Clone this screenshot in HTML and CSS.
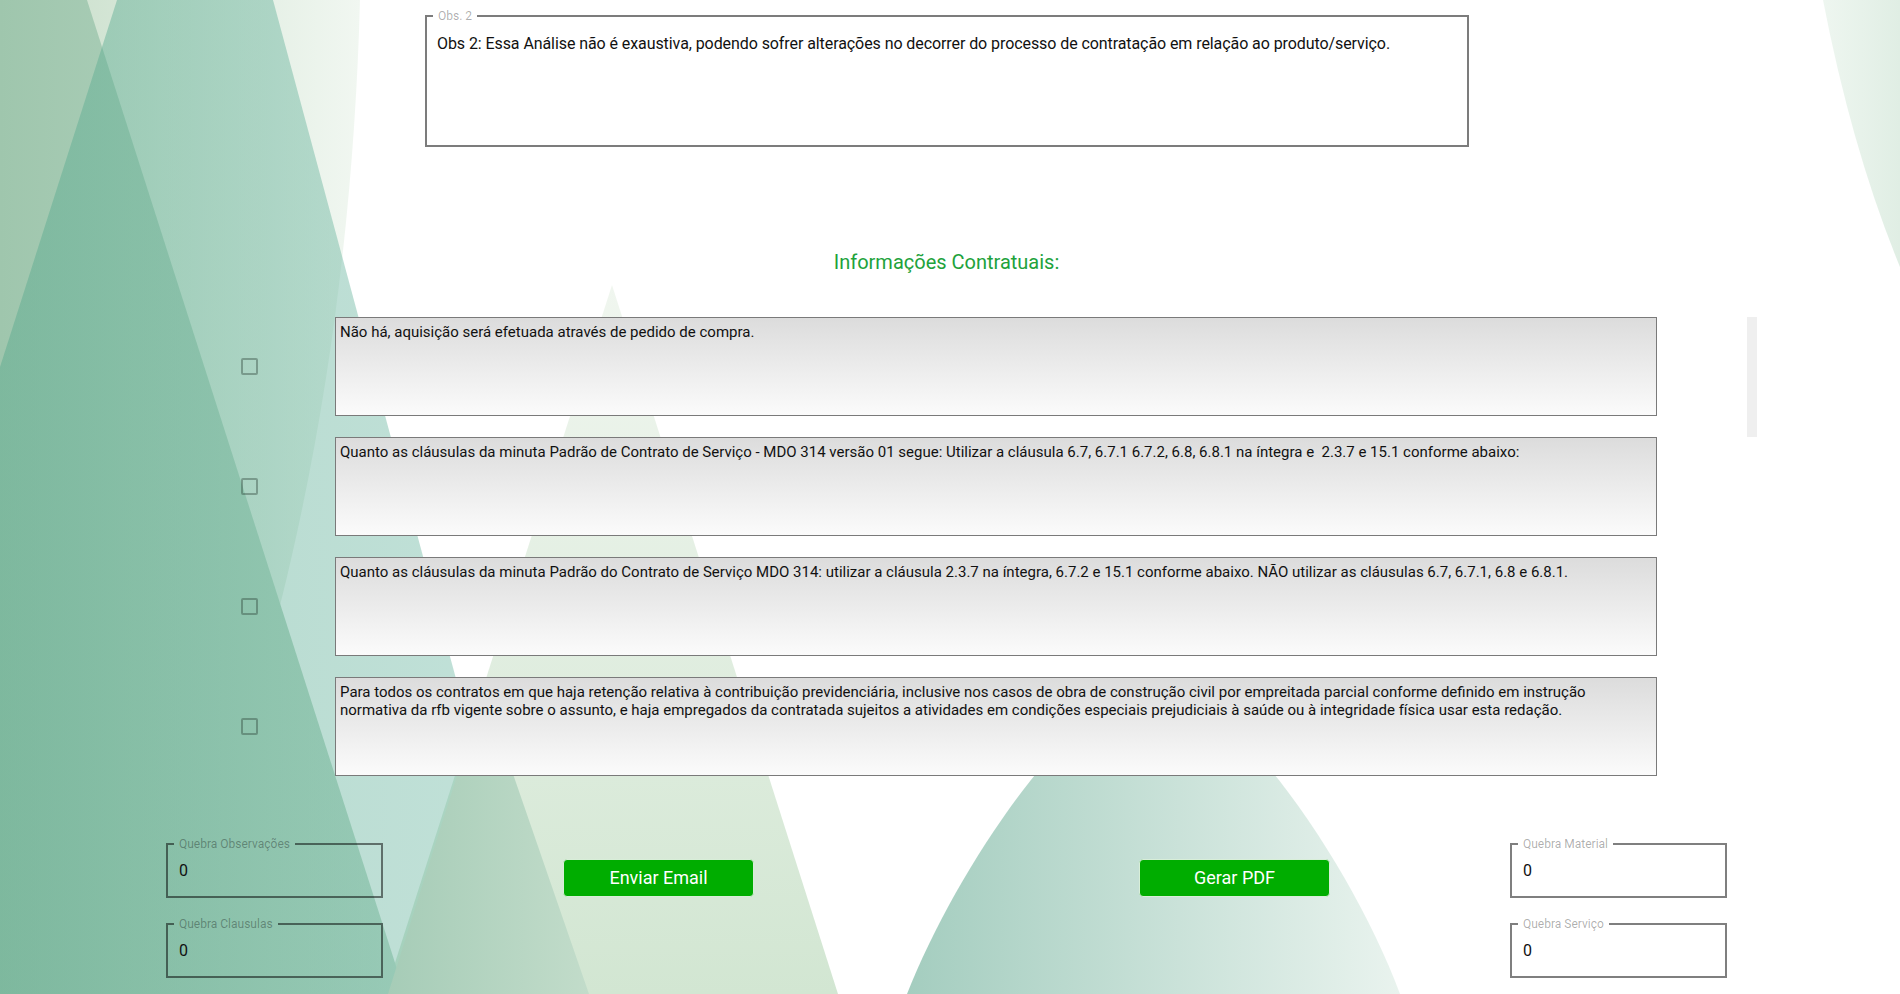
FILE: index.html
```html
<!DOCTYPE html>
<html lang="pt-BR">
<head>
<meta charset="utf-8">
<title>Informações Contratuais</title>
<link rel="stylesheet" href="styles.css">
</head>
<body>
<div class="bg" aria-hidden="true">
  <svg viewBox="0 0 1900 994" width="1900" height="994" preserveAspectRatio="none">
    <defs>
      <linearGradient id="gTC" x1="0" y1="0" x2="360" y2="0" gradientUnits="userSpaceOnUse">
        <stop offset="0" stop-color="#c6ddc8"/>
        <stop offset="1" stop-color="#f1f7f1"/>
      </linearGradient>
      <linearGradient id="gTA" x1="0" y1="0" x2="405" y2="0" gradientUnits="userSpaceOnUse">
        <stop offset="0" stop-color="#9fc6ad"/>
        <stop offset="1" stop-color="#bcdac8"/>
      </linearGradient>
      <linearGradient id="gTB" x1="0" y1="0" x2="541" y2="0" gradientUnits="userSpaceOnUse">
        <stop offset="0" stop-color="#55a88c" stop-opacity="0.45"/>
        <stop offset="1" stop-color="#6eb9a5" stop-opacity="0.42"/>
      </linearGradient>
      <linearGradient id="gTD" x1="0" y1="285" x2="0" y2="994" gradientUnits="userSpaceOnUse">
        <stop offset="0" stop-color="#f0f6ef"/>
        <stop offset="1" stop-color="#d2e6d2"/>
      </linearGradient>
      <linearGradient id="gTE" x1="388" y1="0" x2="589" y2="0" gradientUnits="userSpaceOnUse">
        <stop offset="0" stop-color="#a6ccb7"/>
        <stop offset="1" stop-color="#c2dcca"/>
      </linearGradient>
      <linearGradient id="gTF" x1="907" y1="0" x2="1400" y2="0" gradientUnits="userSpaceOnUse">
        <stop offset="0" stop-color="#a4cdbf"/>
        <stop offset="1" stop-color="#e9f3ee"/>
      </linearGradient>
      <linearGradient id="gTG" x1="1823" y1="0" x2="1900" y2="0" gradientUnits="userSpaceOnUse">
        <stop offset="0" stop-color="#eef6f0"/>
        <stop offset="1" stop-color="#e0eee4"/>
      </linearGradient>
    </defs>
    <path d="M0,0 L360,0 C352,300 300,650 147,994 L0,994 Z" fill="url(#gTC)"/>
    <polygon points="612,285 838,994 385,994" fill="url(#gTD)"/>
    <polygon points="0,0 87,0 405,994 0,994" fill="url(#gTA)"/>
    <polygon points="117,0 273,0 541,994 0,994 0,367" fill="url(#gTB)"/>
    <polygon points="484,690 589,994 388,994" fill="url(#gTE)"/>
    <path d="M907,994 C960,860 1080,690 1155,680 C1230,690 1350,860 1400,994 Z" fill="url(#gTF)"/>
    <path d="M1823,0 Q1852,150 1900,267 L1900,0 Z" fill="url(#gTG)"/>
  </svg>
</div>

<main class="page">
  <fieldset class="outlined obs">
    <legend>Obs. 2</legend>
    <div class="obs-text">Obs 2: Essa Análise não é exaustiva, podendo sofrer alterações no decorrer do processo de contratação em relação ao produto/serviço.</div>
  </fieldset>

  <h2 class="section-title">Informações Contratuais:</h2>

  <section class="clauses">
    <div class="clause-list">
      <div class="clause-row">
        <span class="check" role="checkbox" aria-checked="false"></span>
        <div class="clause-box">Não há, aquisição será efetuada através de pedido de compra.</div>
      </div>
      <div class="clause-row">
        <span class="check" role="checkbox" aria-checked="false"></span>
        <div class="clause-box">Quanto as cláusulas da minuta Padrão de Contrato de Serviço - MDO 314 versão 01 segue: Utilizar a cláusula 6.7, 6.7.1 6.7.2, 6.8, 6.8.1 na íntegra e  2.3.7 e 15.1 conforme abaixo:</div>
      </div>
      <div class="clause-row">
        <span class="check" role="checkbox" aria-checked="false"></span>
        <div class="clause-box">Quanto as cláusulas da minuta Padrão do Contrato de Serviço MDO 314: utilizar a cláusula 2.3.7 na íntegra, 6.7.2 e 15.1 conforme abaixo. NÃO utilizar as cláusulas 6.7, 6.7.1, 6.8 e 6.8.1.</div>
      </div>
      <div class="clause-row">
        <span class="check" role="checkbox" aria-checked="false"></span>
        <div class="clause-box">Para todos os contratos em que haja retenção relativa à contribuição previdenciária, inclusive nos casos de obra de construção civil por empreitada parcial conforme definido em instrução normativa da rfb vigente sobre o assunto, e haja empregados da contratada sujeitos a atividades em condições especiais prejudiciais à saúde ou à integridade física usar esta redação.</div>
      </div>
    </div>
    <div class="scroll-track"></div>
  </section>

  <section class="actions">
    <div class="field-col">
      <fieldset class="outlined field">
        <legend>Quebra Observações</legend>
        <div class="value">0</div>
      </fieldset>
      <fieldset class="outlined field">
        <legend>Quebra Clausulas</legend>
        <div class="value">0</div>
      </fieldset>
    </div>
    <button class="btn btn-email" type="button">Enviar Email</button>
    <button class="btn btn-pdf" type="button">Gerar PDF</button>
    <div class="field-col field-col-right">
      <fieldset class="outlined field">
        <legend>Quebra Material</legend>
        <div class="value">0</div>
      </fieldset>
      <fieldset class="outlined field">
        <legend>Quebra Serviço</legend>
        <div class="value">0</div>
      </fieldset>
    </div>
  </section>
</main>
</body>
</html>
```

FILE: styles.css
```css
html, body {
  margin: 0;
  padding: 0;
}

body {
  position: relative;
  width: 1900px;
  height: 994px;
  overflow: hidden;
  background: #ffffff;
  color: #111111;
  font-family: Roboto, "Liberation Sans", Arial, sans-serif;
}

.bg {
  position: absolute;
  left: 0;
  top: 0;
  width: 1900px;
  height: 994px;
  z-index: 0;
}

.bg svg {
  display: block;
}

.page {
  position: relative;
  z-index: 1;
  padding-top: 9px;
}

/* outlined fieldset (legend sits in the border gap) */
.outlined {
  margin: 0;
  padding: 0 0 0 6px;
  min-width: 0;
  box-sizing: border-box;
  border: 2px solid rgba(0, 0, 0, 0.5);
}

.outlined legend {
  padding: 0 5px;
  font-size: 12px;
  line-height: 14px;
  color: rgba(0, 0, 0, 0.33);
}

.obs {
  margin-left: 425px;
  width: 1044px;
  border-color: #7c7c7c;
}

.obs-text {
  height: 111px;
  padding: 11px 0 0 4px;
  font-size: 16px;
  line-height: 19px;
  letter-spacing: -0.08px;
  color: #111111;
}

.section-title {
  margin: 104px 7px 0 0;
  font-size: 20px;
  font-weight: 400;
  line-height: 23px;
  text-align: center;
  color: #21a23b;
}

.clauses {
  display: flex;
  align-items: flex-start;
  margin-top: 43px;
}

.clause-list {
  display: flex;
  flex-direction: column;
  gap: 21px;
}

.clause-row {
  display: flex;
  align-items: center;
}

.check {
  display: block;
  width: 17px;
  height: 17px;
  box-sizing: border-box;
  border: 2px solid rgba(40, 60, 50, 0.38);
  border-radius: 2px;
  margin-left: 241px;
  margin-right: 77px;
}

.clause-box {
  width: 1322px;
  height: 99px;
  box-sizing: border-box;
  border: 1px solid #7a7a7a;
  background: linear-gradient(#dcdcdc, #fbfbfb);
  padding: 5px 4px;
  font-size: 15px;
  line-height: 18px;
  white-space: pre-wrap;
  color: #111111;
}

.scroll-track {
  width: 10px;
  height: 120px;
  margin-left: 90px;
  background: #efefef;
}

.actions {
  display: flex;
  align-items: flex-start;
  margin-top: 61px;
}

.field-col {
  display: flex;
  flex-direction: column;
  gap: 19px;
  margin-left: 166px;
}

.field-col-right {
  margin-left: 180px;
}

.field {
  width: 217px;
}

.value {
  height: 45px;
  box-sizing: border-box;
  padding: 10px 0 0 5px;
  font-size: 16px;
  line-height: 20px;
  color: #111111;
}

.btn {
  width: 191px;
  height: 38px;
  margin-top: 22px;
  box-sizing: border-box;
  border: 1px solid #d8eed8;
  border-radius: 4px;
  background: #00ad00;
  color: #ffffff;
  font-family: Roboto, "Liberation Sans", Arial, sans-serif;
  font-size: 18px;
  line-height: 20px;
  padding: 0;
  cursor: pointer;
}

.btn-email {
  margin-left: 180px;
}

.btn-pdf {
  margin-left: 385px;
}
```
